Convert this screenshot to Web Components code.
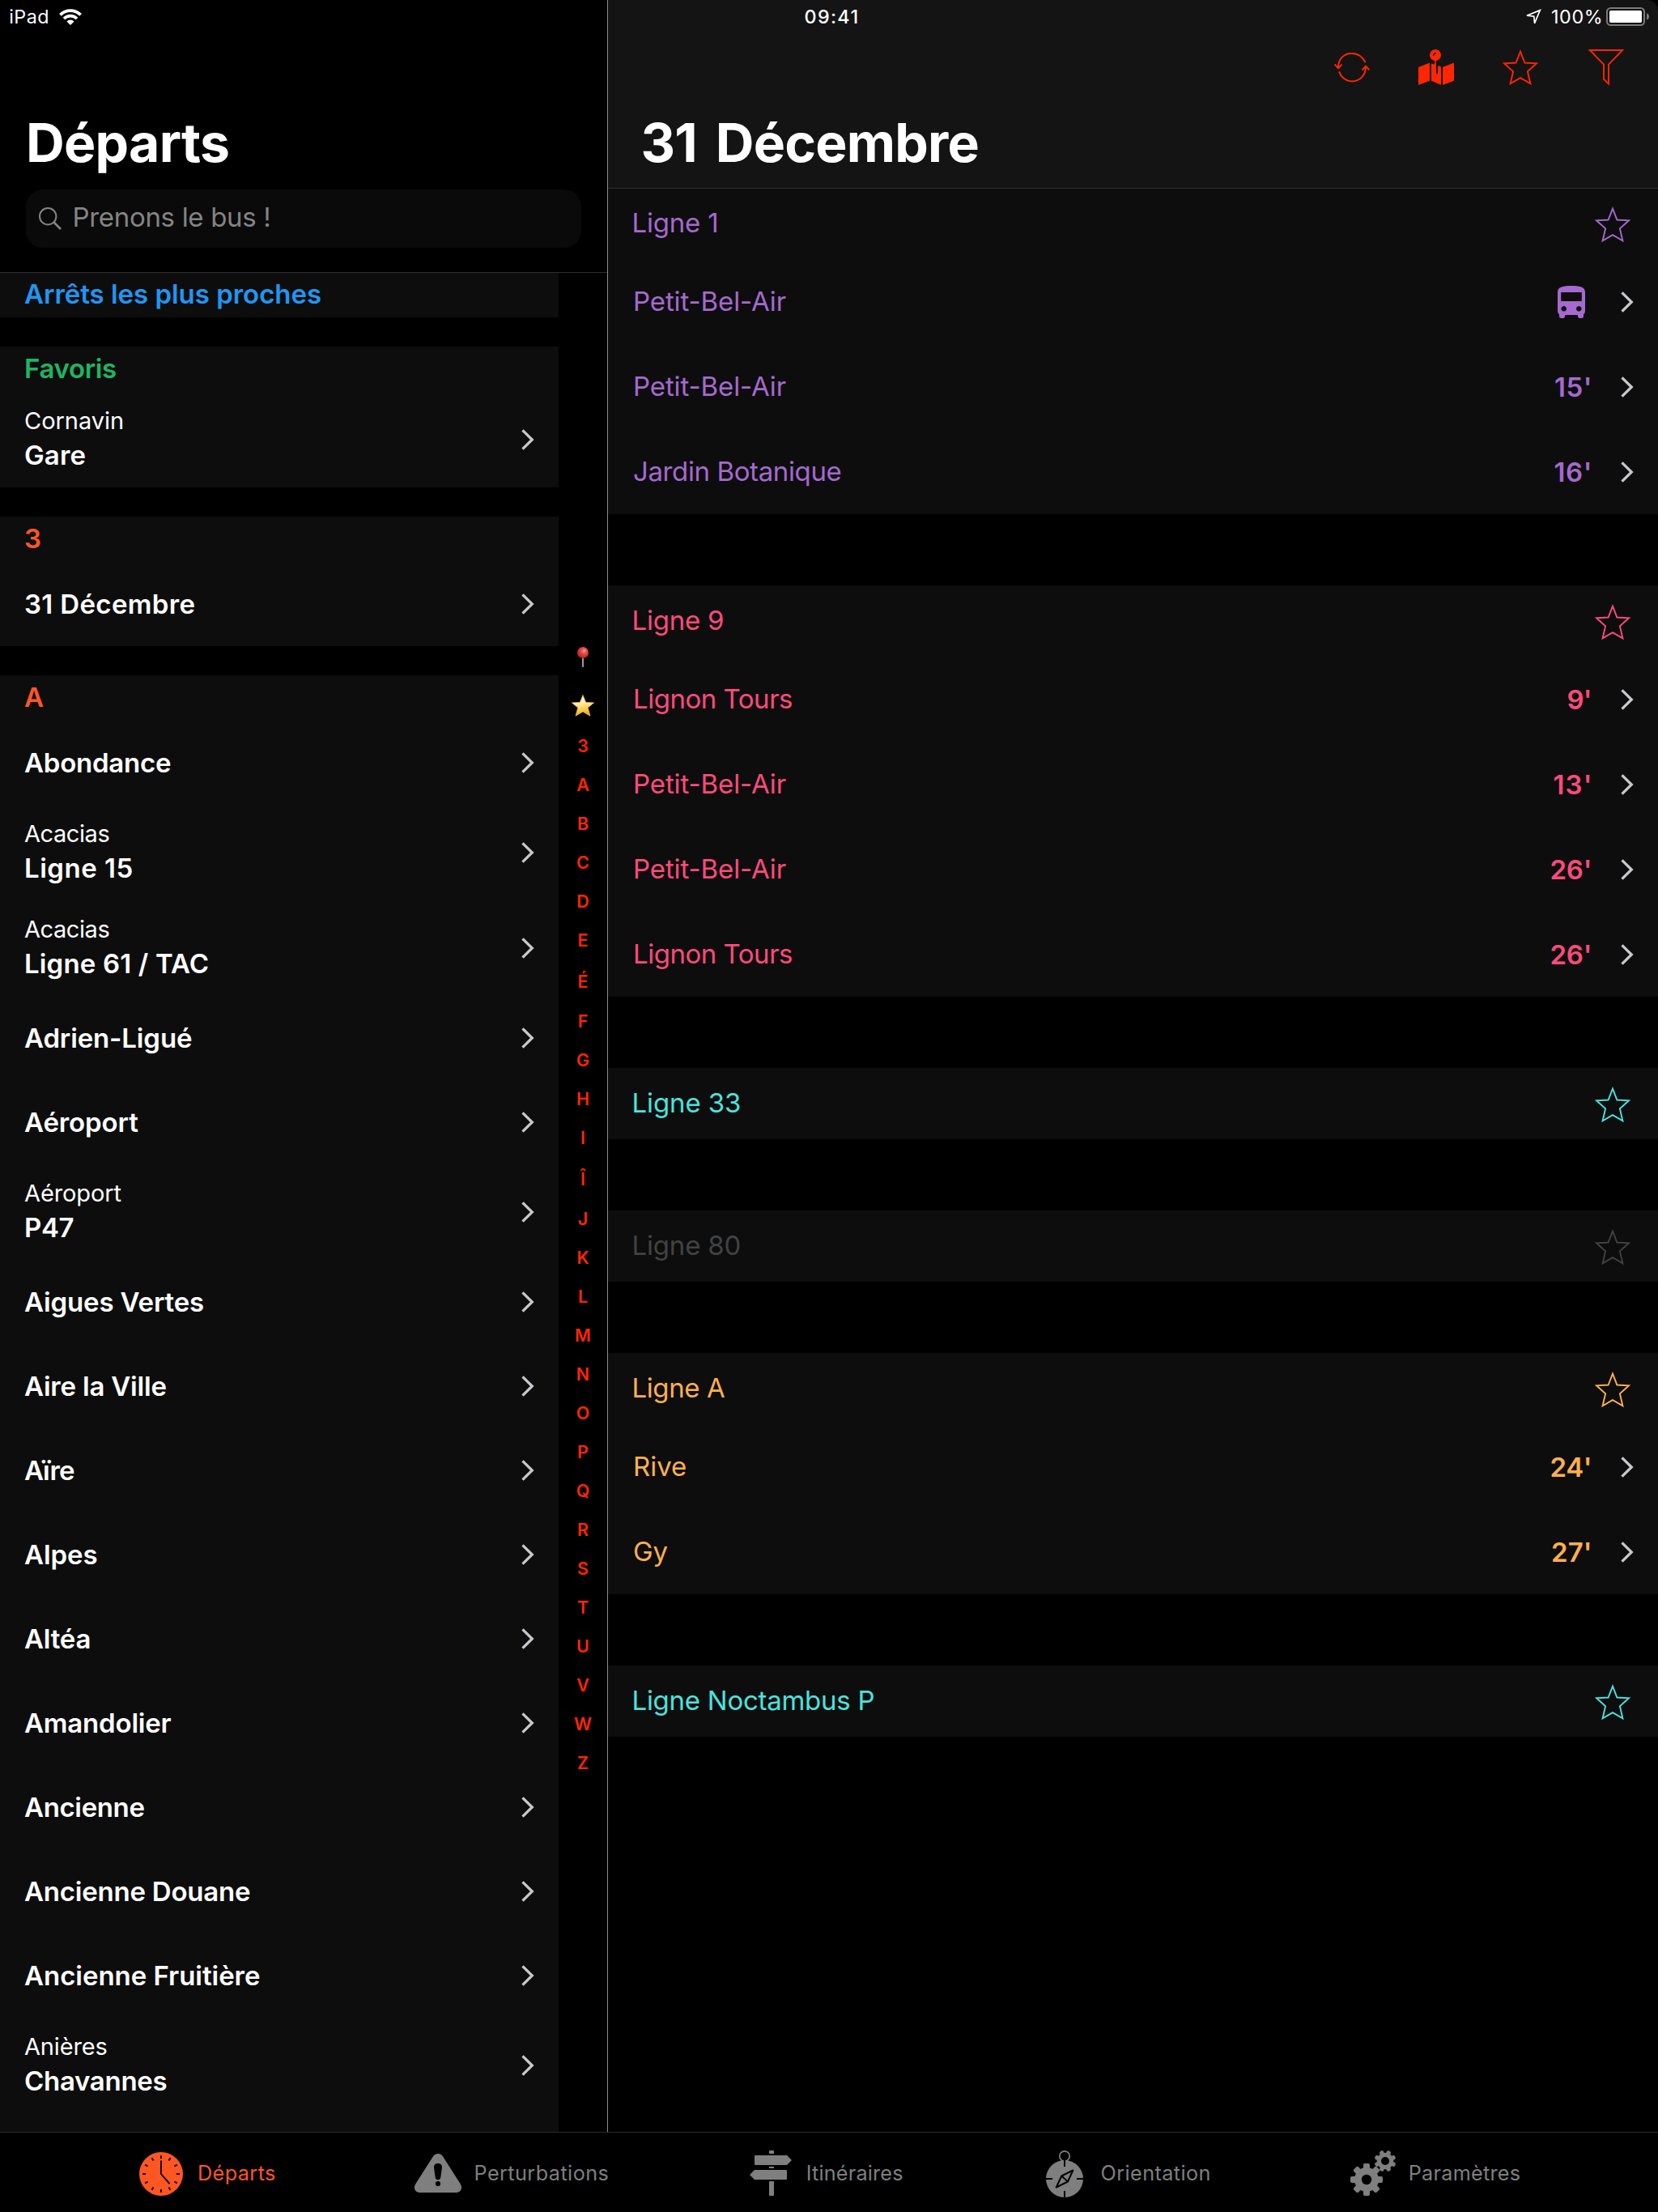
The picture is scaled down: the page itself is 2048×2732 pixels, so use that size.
<!DOCTYPE html>
<html lang="fr">
<head>
<meta charset="utf-8">
<title>Départs</title>
<style>
html,body{margin:0;padding:0;background:#000}
body{width:2048px;height:2732px;overflow:hidden;font-family:Inter,"Liberation Sans",sans-serif;color:#fff}
</style>
</head>
<body>
<transit-app></transit-app>
<script>
const star = '<svg width="44" height="44" viewBox="0 0 44 44" fill="none" stroke="currentColor" stroke-width="1.9"><path d="M22 2.6 27.4 16.5 42 17.3 30.9 27.3 34.4 42.4 22 35.2 9.6 42.4 13.1 27.3 2 17.3 16.6 16.5Z"/></svg>';
const teeth = (cx, cy, r, w, h, rot) => Array.from({length: 8}, (_, i) =>
  `<rect x="${cx - w / 2}" y="${cy - r}" width="${w}" height="${h}" rx="2" transform="rotate(${i * 45 + rot} ${cx} ${cy})"/>`).join('');
const ticks = Array.from({length: 12}, (_, i) => `<path d="M27 4.2V8" transform="rotate(${i * 30} 27 27)"/>`).join('');
const ICONS = {
  star,
  refresh: '<svg width="44" height="44" viewBox="0 0 44 44" fill="none" stroke="currentColor" stroke-width="2"><path d="M5 23C4.6 12 12 5 21.7 5 30 5 36 10 38.5 16.2M.6 18.4 5 23.2 9.6 18.6M6 27.4C8.4 34.5 14.5 39.4 22 39.4 31.800 39.4 39 32 39 21M34.5 25.6 39 20.7 43.4 25.4"/></svg>',
  map: '<svg width="44" height="44" viewBox="0 0 44 44" fill="currentColor"><path d="M0 22 14 16.5V38.7L0 44ZM30 22 44 16.5V38.7L30 44ZM16 17.5 20 18.5H22V30H24V20L28 21.5V44L16 38.8Z"/><circle cx="21" cy="7" r="7"/><path d="M20.2 13h1.700v7h-1.700z"/><path d="M18.8 7.6C18.8 5.6 20 4.6 21.8 4.700" fill="none" stroke="#141414" stroke-width="1.9"/></svg>',
  funnel: '<svg width="44" height="44" viewBox="0 0 44 44" fill="none" stroke="currentColor" stroke-width="1.9"><path d="M1.8 1H42.2L25 18.6V42.5L19 36.8V18.6Z"/></svg>',
  bus: '<svg width="34" height="40" viewBox="0 0 34 40" fill="currentColor"><path fill-rule="evenodd" d="M0 8C0 2 5 0 17 0S34 2 34 8V31Q34 34 32 35V37.5Q32 40 29 40H27.5Q25 40 25 37.5V36H9V37.5Q9 40 6.5 40H5Q2 40 2 37.5V35Q0 34 0 31ZM4.2 8V19H29.8V8ZM7.7 25A3.3 3.3 0 1 0 7.71 25ZM26.3 25A3.3 3.3 0 1 0 26.31 25Z"/></svg>',
  chevron: '<svg width="16" height="26" viewBox="0 0 16 26" fill="none" stroke="#c7c7cc" stroke-width="3.3"><path d="M1.5 1.3 13.3 13 1.5 24.7"/></svg>',
  search: '<svg width="28" height="28" viewBox="0 0 28 28" fill="none" stroke="currentColor" stroke-width="2"><circle cx="11.2" cy="11.2" r="10.2"/><path d="M18.5 18.5 27 27" stroke-width="2.6"/></svg>',
  wifi: '<svg width="28" height="20" viewBox="0 0 28 20" fill="none" stroke="#fff" stroke-width="3.7"><path d="M1.4 7.4A17.8 17.8 0 0 1 26.6 7.4M6 12A11.3 11.3 0 0 1 22 12"/><path d="M14 20 9.4 15.4A6.5 6.5 0 0 1 18.6 15.4Z" fill="#fff" stroke="none"/></svg>',
  locate: '<svg width="20" height="20" viewBox="0 0 20 20" fill="none" stroke="#fff" stroke-width="1.7"><path d="M18.3 1.6 2 8.2 10.8 9.2 11.5 17.8Z"/></svg>',
  battery: '<svg width="54" height="24" viewBox="0 0 54 24"><rect x="1" y="1" width="46" height="21" rx="4.5" fill="none" stroke="#7a7a7a" stroke-width="2"/><rect x="4" y="4" width="40" height="15" rx="1.8" fill="#fff"/><path d="M50 7.5C54 8.5 54 14.5 50 15.5Z" fill="#7a7a7a"/></svg>',
  pin: '<svg width="16" height="27" viewBox="0 0 16 27"><defs><radialGradient id="r" cx=".6" cy=".35" r=".65"><stop offset="0" stop-color="#ffa49a"/><stop offset=".35" stop-color="#e4504c"/><stop offset="1" stop-color="#b81f27"/></radialGradient></defs><path d="M7 13h2v11.5q-1 1.5-2 0z" fill="#a29a98"/><circle cx="8" cy="7" r="7" fill="url(#r)"/></svg>',
  goldstar: '<svg width="28" height="27" viewBox="0 0 28 27"><defs><linearGradient id="g" x1="0" y1="0" x2=".25" y2="1"><stop offset="0" stop-color="#fff3c0"/><stop offset=".45" stop-color="#fff0b0"/><stop offset="1" stop-color="#f5b100"/></linearGradient></defs><path d="M14 .5 17.6 9.4 27.6 9.9 20.2 16.1 23 26.2 14 21 5 26.2 7.8 16.1.4 9.9 10.4 9.4Z" fill="url(#g)" stroke="#f3c651" stroke-width=".7" stroke-linejoin="round"/></svg>',
  clock: `<svg width="54" height="54" viewBox="0 0 54 54"><circle cx="27" cy="27" r="27" fill="currentColor"/><g stroke="#000" stroke-width="2" fill="none">${ticks}<path d="M27 10.5V27L37.5 39.2" stroke-width="1.9"/></g></svg>`,
  warning: '<svg width="58" height="48" viewBox="0 0 58 48"><path fill="currentColor" d="M29 0C31.6 0 33.8 1.3 35.3 3.7L56.8 37.5C59.9 42.5 57 48 51.5 48H6.5C1 48-1.9 42.5 1.2 37.5L22.7 3.7C24.2 1.3 26.4 0 29 0Z"/><path d="M29 12Q34 12 34 17L32.3 29Q31.8 32.2 29 32.2T25.7 29L24 17Q24 12 29 12Z"/><circle cx="29" cy="37" r="3.1"/></svg>',
  sign: '<svg width="52" height="56" viewBox="0 0 52 56" fill="currentColor"><path d="M25 0h4q1 0 1 1v3h-6V1q0-1 1-1ZM7 6H46L52 12 46 18H7Q6 18 6 17V7Q6 6 7 6ZM24 20h6v2h-6ZM6 24H45Q46 24 46 25V35Q46 36 45 36H6L0 30ZM24 38h6V55q0 1-1 1H25q-1 0-1-1Z"/></svg>',
  compass: '<svg width="46" height="58" viewBox="0 0 46 58"><circle cx="23" cy="35" r="23" fill="currentColor"/><circle cx="23" cy="7" r="6.2" fill="#000" stroke="currentColor" stroke-width="1.7"/><g stroke="#000" stroke-width="2" fill="none" stroke-linejoin="round"><path d="M23 12V20M23 50V58M0 35H8M38 35H46M33.3 24.5 27 38.5 12.7 45.5 19.3 31.5ZM19.3 31.5 27 38.5"/></g></svg>',
  gears: `<svg width="56" height="56" viewBox="0 0 56 56"><g fill="currentColor"><circle cx="20" cy="36" r="15"/>${teeth(20, 36, 20, 8, 8, 0)}<circle cx="43" cy="13" r="10.3"/>${teeth(43, 13, 13.4, 5.4, 6, 22.5)}</g><circle cx="20" cy="36" r="6.2"/><circle cx="43" cy="13" r="5"/></svg>`
};

function define(name, css, render, after) {
  customElements.define(name, class extends HTMLElement {
    connectedCallback() {
      if (this.shadowRoot) return;
      this.attachShadow({mode: 'open'}).innerHTML = `<style>${css}</style>${render(k => this.getAttribute(k) || '', this)}`;
      if (after) after(this);
    }
  });
}

const pen = document.createElement('canvas').getContext('2d');

/* Single line label: "span" is the width of its glyphs from edge to edge, "word" widens its spaces; tracking follows from both. */
define('ui-text', ':host{display:block;flex:none;white-space:pre}span{display:inline-block}', () => '<span><slot></slot></span>', el => {
  const cs = getComputedStyle(el), text = el.textContent, span = parseFloat(el.getAttribute('span'));
  const word = parseFloat(el.getAttribute('word')) || 0, size = parseFloat(cs.fontSize);
  /* measured at ten times the size, since glyph bounds come back in whole pixels */
  pen.font = `${cs.fontWeight} ${size * 10}px ${cs.fontFamily}`;
  const m = pen.measureText(text), left = -m.actualBoundingBoxLeft / 10;
  const ink = m.actualBoundingBoxRight / 10 - left + word * (text.split(' ').length - 1);
  const inner = el.shadowRoot.querySelector('span');
  el.style.width = (span || ink) + left + 'px';
  if (word) inner.style.wordSpacing = word + 'px';
  if (span && text.length > 1) inner.style.letterSpacing = ((span - ink) / (text.length - 1)).toFixed(3) + 'px';
});

define('ui-icon', ':host{display:block;flex:none;line-height:0}svg{display:block;overflow:visible}', a => ICONS[a('name')]);

define('stop-row', `
  :host{display:flex;align-items:center;justify-content:space-between;height:104px;padding:0 30px;font-size:33px;font-weight:600}
  :host([sub]){height:118px}
  .t{display:flex;flex-direction:column;line-height:42px}
  :host([sub]) .t{padding-bottom:5px}
  .s{font-size:29px;font-weight:400}
  .x{height:42px}
  :host([name=""]){margin-top:-1px}`,
  a => `<div class="t">${a('sub') ? `<ui-text class="s" span="${a('subspan')}">${a('sub')}</ui-text>` : ''}${a('name') ? `<ui-text span="${a('span')}">${a('name')}</ui-text>` : '<div class="x"></div>'}</div><ui-icon name="chevron"></ui-icon>`);

define('stop-section', `
  :host{display:block;background:#0d0d0d;margin-bottom:36px}
  .h{height:56px;padding-left:30px;line-height:54px;font-size:33px;font-weight:600}`,
  a => `<div class="h" style="color:${a('tint')}"><ui-text span="${a('span')}">${a('name')}</ui-text></div><slot></slot>`);

define('index-rail', `
  :host{display:flex;flex-direction:column;align-items:center;width:60px;padding-top:443px;color:#ff2600;font-size:21.5px;font-weight:600}
  .p{height:48px;padding-top:20px}.g{height:38.5px;padding-top:11px}
  .l{height:48px;line-height:48px}.tall{height:52px;line-height:54px}`,
  () => '<div class="p"><ui-icon name="pin"></ui-icon></div><div class="g"><ui-icon name="goldstar"></ui-icon></div>' +
    [...'3ABCDEÉFGHIÎJKLMNOPQRSTUVWZ'].map(c => `<div class="l${'ÉÎ'.includes(c) ? ' tall' : ''}">${c}</div>`).join(''));

const stops = [
  ['Abondance', 180], ['Ligne 15', 131, 'Acacias', 104], ['Ligne 61 / TAC', 225, 'Acacias', 104], ['Adrien-Ligué', 206],
  ['Aéroport', 140], ['P47', 58.5, 'Aéroport', 119], ['Aigues Vertes', 220.5], ['Aire la Ville', 174.5], ['Aïre', 61], ['Alpes', 89],
  ['Altéa', 80], ['Amandolier', 181], ['Ancienne', 147.5], ['Ancienne Douane', 278], ['Ancienne Fruitière', 290],
  ['Chavannes', 174, 'Anières', 101], ['', 0, 'Anières', 101]];
const row = ([n, w, s, sw]) => `<stop-row name="${n}" span="${w}"${s ? ` sub="${s}" subspan="${sw}"` : ''}></stop-row>`;

define('stops-pane', `
  :host{display:flex;flex-direction:column;width:750px;height:2633px;overflow:hidden;flex:none}
  header{height:336px;border-bottom:1px solid #2e2e2e;flex:none;box-sizing:content-box;margin-bottom:-1px;position:relative}
  .status{display:flex;align-items:center;gap:14px;height:41px;padding-left:11.3px;font-size:23.3px}
  h1{margin:0;height:88px;line-height:88px;padding:91px 0 0 32px;font-size:66px;font-weight:700}
  .search{display:flex;align-items:center;gap:13.5px;box-sizing:border-box;width:686px;height:72px;margin:14px 0 0 32px;padding-left:16px;border-radius:21px;background:#0a0a0a;color:#848484;font-size:33px}
  .search ui-text{margin-top:-4px}
  .body{display:flex;flex:1;min-height:0}
  .list{width:690px;flex:none}`,
  () => `<header><div class="status"><ui-text span="46">iPad</ui-text><ui-icon name="wifi"></ui-icon></div>
  <h1><ui-text span="246">Départs</ui-text></h1>
  <div class="search"><ui-icon name="search"></ui-icon><ui-text span="240.5">Prenons le bus !</ui-text></div></header>
  <div class="body"><div class="list">
  <stop-section name="Arrêts les plus proches" span="365.5" tint="#2196f3"></stop-section>
  <stop-section name="Favoris" span="111" tint="#1db565">${row(['Gare', 73.5, 'Cornavin', 119.5])}</stop-section>
  <stop-section name="3" tint="#ff5722">${row(['31 Décembre', 208.5])}</stop-section>
  <stop-section name="A" tint="#ff5722">${stops.map(row).join('')}</stop-section>
  </div><index-rail></index-rail></div>`);

define('departure-row', `
  :host{display:flex;align-items:center;height:105px;padding:0 30px 0 31px;font-size:33px}
  .n{flex:1;display:flex;padding-bottom:2px}
  .w{font-weight:600;margin-right:38.5px}.b{margin-right:44px}`,
  a => `<div class="n"><ui-text span="${a('span')}">${a('name')}</ui-text></div>${a('time') ? `<ui-text class="w" span="${a('timespan')}">${a('time')}</ui-text>` : '<ui-icon class="b" name="bus"></ui-icon>'}<ui-icon name="chevron"></ui-icon>`);

define('line-section', `
  :host{display:block;background:#0d0d0d;margin-bottom:88px}
  .h{display:flex;justify-content:space-between;height:88px;padding:0 34px 0 29.5px;font-size:33px;line-height:86px}
  .h ui-icon{padding-top:23px}`,
  a => `<div class="h"><ui-text span="${a('span')}">${a('name')}</ui-text><ui-icon name="star"></ui-icon></div><slot></slot>`);

const P = ['Petit-Bel-Air', 186], L = ['Lignon Tours', 193.5];
const lines = [
  ['Ligne 1', 102, '#a569cf', [[...P], [...P, "15'", 42.5], ['Jardin Botanique', 255, "16'", 43]]],
  ['Ligne 9', 109.5, '#ff4a7d', [[...L, "9'", 26.5], [...P, "13'", 44], [...P, "26'", 47.5], [...L, "26'", 47.5]]],
  ['Ligne 33', 130.5, '#49e3df', []],
  ['Ligne 80', 130.5, '#424242', []],
  ['Ligne A', 112, '#ffb04c', [['Rive', 62.5, "24'", 47.5], ['Gy', 41, "27'", 46]]],
  ['Ligne Noctambus P', 296, '#49e3df', []]];

define('departures-pane', `
  :host{display:block;flex:1;height:2633px;box-sizing:border-box;overflow:hidden;border-left:1px solid #8c8c8c}
  header{height:232px;background:#141414;border-bottom:1px solid #303030;border-top-right-radius:14px;margin-bottom:-1px;position:relative}
  .status{display:flex;align-items:center;height:41px;padding:0 10px 0 242.5px;font-size:23.3px}
  .status .t{font-weight:500;margin-right:auto}
  .pct{margin:0 7px 0 12px}
  .tools{display:flex;height:44px;padding:20px 42px 0 0;justify-content:flex-end;gap:60px;color:#ff2600}
  .tools :last-child{margin-left:2px}
  h1{margin:0;padding:27px 0 0 40.5px;height:88px;line-height:88px;font-size:66px;font-weight:700}`,
  () => `<header><div class="status"><ui-text class="t" span="63.5">09:41</ui-text><ui-icon name="locate"></ui-icon><ui-text class="pct" span="60">100%</ui-text><ui-icon name="battery"></ui-icon></div>
  <div class="tools"><ui-icon name="refresh"></ui-icon><ui-icon name="map"></ui-icon><ui-icon name="star"></ui-icon><ui-icon name="funnel"></ui-icon></div>
  <h1><ui-text span="413" word="8">31 Décembre</ui-text></h1></header>
  ${lines.map(([n, w, c, rows]) => `<line-section name="${n}" span="${w}" style="color:${c}">${rows.map(([d, dw, t, tw]) =>
    `<departure-row name="${d}" span="${dw}"${t ? ` time="${t}" timespan="${tw}"` : ''}></departure-row>`).join('')}</line-section>`).join('')}`);

const tabs = [['clock', 'Départs', 18, 93, 172, 'active'], ['warning', 'Perturbations', 15.3, 163, 173], ['sign', 'Itinéraires', 17.5, 116.5, 175.5],
  ['compass', 'Orientation', 21.7, 132.5, 177.5], ['gears', 'Paramètres', 15.7, 135, 174.5]];
define('tab-bar', `
  :host{display:flex;height:96px;padding-top:2px;border-top:1px solid #2b2b2b;background:#000}
  div{display:flex;align-items:center;color:#7f7f7f;font-size:25.2px}
  [name=clock],[name=compass]{padding-top:2px}
  .active{color:#ff5722}`,
  () => tabs.map(([i, t, g, w, m, c]) => `<div class="${c || ''}" style="margin-left:${m}px"><ui-icon name="${i}"></ui-icon><ui-text style="margin-left:${g}px" span="${w}">${t}</ui-text></div>`).join(''));

define('transit-app', ':host{display:block;width:2048px;height:2732px;overflow:hidden}.m{display:flex}',
  () => '<div class="m"><stops-pane></stops-pane><departures-pane></departures-pane></div><tab-bar></tab-bar>');
</script>
</body>
</html>
